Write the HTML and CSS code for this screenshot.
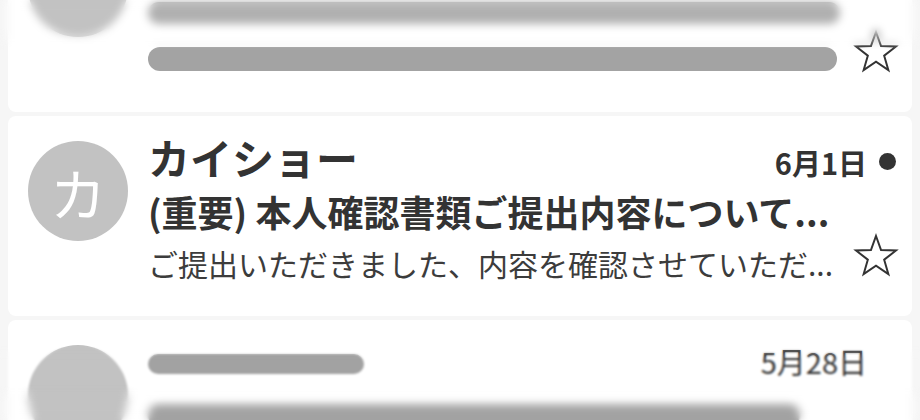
FILE: index.html
```html
<!DOCTYPE html>
<html lang="ja">
<head>
<meta charset="utf-8">
<title>受信トレイ</title>
<link rel="stylesheet" href="styles.css">
</head>
<body>
<div class="list">
  <div class="card">
    <div class="avatar"></div>
    <div class="content">
      <div class="row row-name"><span class="bar bar-name-ph"></span></div>
      <div class="row row-subject"><span class="bar bar-top"></span></div>
      <div class="row row-snippet">
        <span class="bar bar-snippet"></span>
        <svg class="star" viewBox="0 0 48 46" width="48" height="46"><path d="M24 4 L29.05 18.04 L43.97 18.51 L32.18 27.66 L36.34 41.99 L24 33.6 L11.66 41.99 L15.82 27.66 L4.03 18.51 L18.95 18.04 Z"/></svg>
      </div>
    </div>
  </div>

  <div class="card">
    <div class="avatar"><span class="initial">カ</span></div>
    <div class="content">
      <div class="row row-name">
        <span class="name">カイショー</span>
        <span class="date date-unread">6月1日</span>
        <span class="dot"></span>
      </div>
      <div class="row row-subject"><span class="subject">(重要) 本人確認書類ご提出内容について...</span></div>
      <div class="row row-snippet">
        <span class="snippet">ご提出いただきました、内容を確認させていただ...</span>
        <svg class="star" viewBox="0 0 48 46" width="48" height="46"><path d="M24 4 L29.05 18.04 L43.97 18.51 L32.18 27.66 L36.34 41.99 L24 33.6 L11.66 41.99 L15.82 27.66 L4.03 18.51 L18.95 18.04 Z"/></svg>
      </div>
    </div>
  </div>

  <div class="card">
    <div class="avatar"></div>
    <div class="content">
      <div class="row row-name">
        <span class="name"><span class="bar bar-name"></span></span>
        <span class="date">5月28日</span>
        <span class="dot dot-read"></span>
      </div>
      <div class="row row-subject"><span class="bar bar-subject"></span></div>
      <div class="row row-snippet"><span class="bar bar-snippet"></span></div>
    </div>
  </div>
</div>
<div class="fade fade-top"></div>
<div class="fade fade-bottom-soft"></div>
<div class="fade fade-bottom"></div>
</body>
</html>
```

FILE: styles.css
```css
html, body {
  margin: 0;
  padding: 0;
  background: #f6f6f6;
  font-family: "Noto Sans CJK JP", "Noto Sans", sans-serif;
  color: #333;
  overflow: hidden;
  height: 420px;
}

.list {
  display: flex;
  flex-direction: column;
  gap: 4px;
  padding: 0 8px;
  margin-top: -88px;
}

.card {
  background: #fff;
  border-radius: 8px;
  height: 200px;
  box-sizing: border-box;
  padding: 14px 16px 28px 20px;
  display: flex;
  align-items: flex-start;
  gap: 20px;
}

.avatar {
  flex: none;
  width: 100px;
  height: 100px;
  margin-top: 11px;
  border-radius: 50%;
  background: #c2c2c2;
  display: flex;
  align-items: center;
  justify-content: center;
}

.initial {
  color: #fff;
  font-size: 56px;
  line-height: 1;
  font-weight: 400;
  margin-top: 2px;
}

.content {
  flex: 1;
  min-width: 0;
  display: flex;
  flex-direction: column;
}

.row {
  display: flex;
  align-items: center;
  min-width: 0;
}

.row-name {
  height: 54px;
  align-items: baseline;
}

.row-subject {
  height: 54px;
}

.row-snippet {
  height: 50px;
}

.name {
  flex: 1;
  font-size: 42px;
  font-weight: 700;
  line-height: 54px;
  color: #333;
  white-space: nowrap;
  display: flex;
  align-items: center;
  height: 54px;
}

.date {
  font-size: 29px;
  line-height: 54px;
  color: #333;
  white-space: nowrap;
}

.date-unread {
  font-weight: 700;
}

.dot {
  flex: none;
  width: 17px;
  height: 17px;
  border-radius: 50%;
  background: #333;
  margin-left: 12px;
  align-self: center;
  margin-top: 8px;
}

.dot-read {
  visibility: hidden;
}

.subject {
  font-size: 36px;
  font-weight: 700;
  line-height: 54px;
  color: #333;
  white-space: nowrap;
  overflow: hidden;
}

.snippet {
  flex: 1;
  min-width: 0;
  font-size: 30px;
  line-height: 50px;
  color: #3c3c3c;
  white-space: nowrap;
  overflow: hidden;
}

.star {
  flex: none;
  margin-left: auto;
  margin-right: -4px;
  margin-bottom: 16px;
  overflow: visible;
  fill: none;
  stroke: #333;
  stroke-width: 2;
  stroke-linejoin: miter;
}

.bar {
  display: block;
  background: #a3a3a3;
  border-radius: 12px;
  height: 24px;
}

.bar-name-ph {
  width: 300px;
  align-self: center;
}

.bar-top {
  width: 692px;
  height: 22px;
  margin-top: 12px;
  background: #b0b0b0;
}

.bar-snippet {
  width: 689px;
  flex: none;
}

.bar-name {
  width: 216px;
  height: 20px;
  border-radius: 10px;
  margin-top: 4px;
  background: #a2a2a2;
}

.bar-subject {
  width: 652px;
  height: 22px;
  background: #a2a2a2;
}

.fade {
  position: fixed;
  left: 0;
  right: 0;
  pointer-events: none;
}

.fade-top {
  top: 0;
  height: 50px;
  backdrop-filter: blur(4px);
  -webkit-mask-image: linear-gradient(to bottom, #000 0, #000 55%, transparent 100%);
  mask-image: linear-gradient(to bottom, #000 0, #000 55%, transparent 100%);
}

.fade-bottom-soft {
  top: 345px;
  bottom: 0;
  backdrop-filter: blur(1px);
  -webkit-mask-image: linear-gradient(to bottom, transparent 0, #000 20%);
  mask-image: linear-gradient(to bottom, transparent 0, #000 20%);
}

.fade-bottom {
  top: 385px;
  bottom: 0;
  backdrop-filter: blur(4px);
  -webkit-mask-image: linear-gradient(to bottom, transparent 0, #000 50%);
  mask-image: linear-gradient(to bottom, transparent 0, #000 50%);
}
```
